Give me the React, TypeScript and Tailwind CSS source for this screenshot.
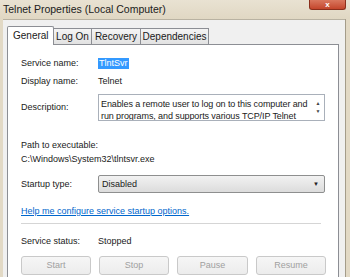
import React from "react";

const Btn = ({ label, w }: { label: string; w: string }) => (
  <div
    className={`${w} h-[19px] flex items-center justify-center rounded-[3px] border border-[#c9c9c9] bg-gradient-to-b from-[#f6f6f6] to-[#ececec] text-[#a0a0a0]`}
  >
    {label}
  </div>
);

export default function App() {
  return (
    <div
      className="relative w-[350px] h-[277px] overflow-hidden bg-[#e2d9c5] text-[#1a1a1a] text-[9px] leading-none"
      style={{ fontFamily: '"Liberation Sans", Arial, sans-serif' }}
    >
      {/* title bar */}
      <div className="h-[19px] flex items-center pl-[3px] text-[10.5px] text-[#202020] bg-gradient-to-b from-[#e9e2d2] to-[#e0d7c3]">
        Telnet Properties (Local Computer)
      </div>
      {/* close button */}
      <div className="absolute top-0 left-[309px] w-[37px] h-[10px] rounded-b-[3px] border border-t-0 border-[#8a2f1c] bg-gradient-to-b from-[#d9775e] to-[#c3452b] flex items-center justify-center">
        <span className="text-white text-[8px] font-bold leading-[8px]">x</span>
      </div>

      <div className="flex h-[258px]">
        <div className="w-[3px]" />
        <div className="w-[342px] bg-[#f0f0f0] border-t border-[#b9b2a2] pl-[4px] pr-[4px] pt-[6px] flex flex-col">
          {/* tabs */}
          <div className="flex items-end h-[18px] relative z-10">
            <div className="w-[47px] h-[19px] bg-white border border-[#8c8e94] border-b-0 rounded-t-[2px] flex items-center pl-[5px] text-[10px] -mb-[1px]">
              General
            </div>
            <div className="w-[38px] h-[16px] bg-gradient-to-b from-[#f4f4f4] to-[#e2e2e2] border border-[#8c8e94] border-l-0 border-b-0 flex items-center justify-center text-[10px]">
              Log On
            </div>
            <div className="w-[49px] h-[16px] bg-gradient-to-b from-[#f4f4f4] to-[#e2e2e2] border border-[#8c8e94] border-l-0 border-b-0 flex items-center justify-center text-[10px]">
              Recovery
            </div>
            <div className="w-[68px] h-[16px] bg-gradient-to-b from-[#f4f4f4] to-[#e2e2e2] border border-[#8c8e94] border-l-0 border-b-0 flex items-center justify-center text-[10px]">
              Dependencies
            </div>
          </div>
          {/* panel */}
          <div className="flex-1 bg-white border border-[#8c8e94] border-b-0 w-[332px] pl-[13px] pt-[12px] flex flex-col">
            <div className="flex items-center h-[12px]">
              <div className="w-[77px]">Service name:</div>
              <span className="bg-[#3399ff] text-white px-[1px] py-[1px]">TlntSvr</span>
            </div>
            <div className="flex items-center h-[12px] mt-[6px]">
              <div className="w-[77px]">Display name:</div>
              <span>Telnet</span>
            </div>
            <div className="flex items-center mt-[7px]">
              <div className="w-[77px]">Description:</div>
              <div className="w-[227px] h-[27px] border border-[#a9b0ba] flex">
                <div className="flex-1 pl-[2px] pt-[3px] leading-[12px] whitespace-nowrap overflow-hidden tracking-[-0.1px]">
                  <div>Enables a remote user to log on to this computer and</div>
                  <div>run programs, and supports various TCP/IP Telnet</div>
                </div>
                <div className="w-[12px] flex flex-col items-center justify-between py-[6px] text-[5px] text-[#444]">
                  <span>▲</span>
                  <span>▼</span>
                </div>
              </div>
            </div>
            <div className="mt-[20px]">Path to executable:</div>
            <div className="mt-[5px]">C:\Windows\System32\tlntsvr.exe</div>
            <div className="flex items-center mt-[11px]">
              <div className="w-[77px]">Startup type:</div>
              <div className="w-[227px] h-[18px] rounded-[2px] border border-[#8e8f8f] bg-gradient-to-b from-[#f2f2f2] to-[#dcdcdc] flex items-center pl-[3px] pr-[5px] justify-between">
                <span>Disabled</span>
                <span className="text-[6px] text-[#222]">▼</span>
              </div>
            </div>
            <div className="mt-[14px] text-[#0066cc] underline underline-offset-[1px]">
              Help me configure service startup options.
            </div>
            <div className="mt-[7px] w-[300px] h-[1px] bg-[#d5d5d5]" />
            <div className="flex items-center mt-[13px]">
              <div className="w-[77px]">Service status:</div>
              <span>Stopped</span>
            </div>
            <div className="flex mt-[10px] gap-[8px]">
              <Btn label="Start" w="w-[70px]" />
              <Btn label="Stop" w="w-[70px]" />
              <Btn label="Pause" w="w-[71px]" />
              <Btn label="Resume" w="w-[70px]" />
            </div>
          </div>
        </div>
        <div className="flex-1 border-l border-[#a49c8a]" />
      </div>
    </div>
  );
}
